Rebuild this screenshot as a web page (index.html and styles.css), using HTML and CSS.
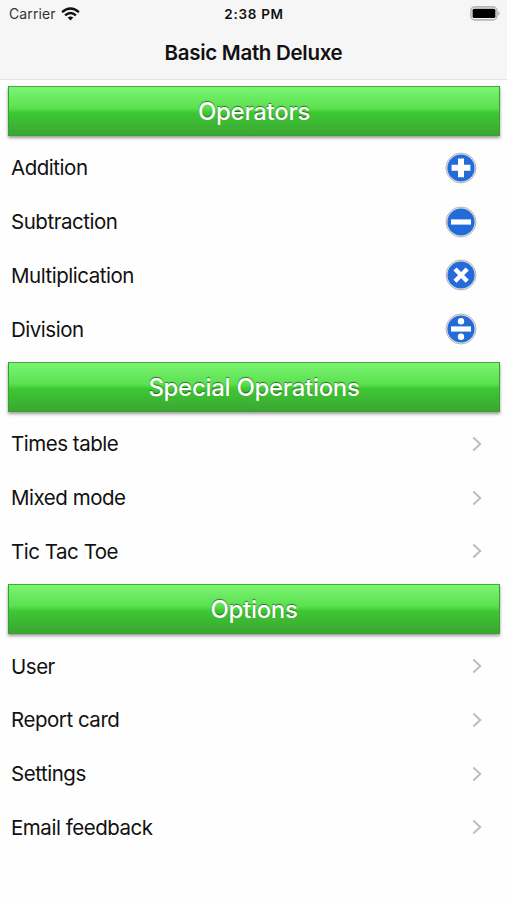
FILE: index.html
```html
<!DOCTYPE html>
<html lang="en">
<head>
<meta charset="utf-8">
<meta name="viewport" content="width=device-width">
<title>Basic Math Deluxe</title>
<link rel="stylesheet" href="styles.css">
</head>
<body>
<header class="top">
  <div class="status">
    <div class="carrier"><span>Carrier</span>
      <svg class="wifi" width="19" height="14" viewBox="0 0 19 14" fill="none" stroke="#111" stroke-width="2.5"><path d="M1.1 5.1Q9.5-2 17.9 5.1"/><path d="M4.1 8.4Q9.5 3.7 14.9 8.4"/><path d="M6.7 10.6Q9.5 8.2 12.3 10.6L9.5 13.5Z" fill="#111" stroke="none"/></svg>
    </div>
    <time class="time">2:38 PM</time>
    <svg class="battery" width="31" height="15" viewBox="0 0 31 15"><rect x=".9" y=".9" width="26" height="13" rx="4" fill="#f7f7f7" stroke="#b7b7b7" stroke-width="1.6"/><rect x="2.6" y="2.8" width="22.8" height="9.2" rx="1.5" fill="#000"/><path d="M28.2 5Q31 7.4 28.2 9.8Z" fill="#aaa"/></svg>
  </div>
  <h1 class="title">Basic Math Deluxe</h1>
</header>
<main>
  <section>
    <h2 class="banner">Operators</h2>
    <ul class="rows">
      <li class="row"><span>Addition</span><svg class="op" viewBox="0 0 32 32"><circle class="rim" cx="16" cy="16" r="15"/><circle class="disc" cx="16" cy="16" r="13.6"/><path class="sign" d="M16 6.4V25.2M6.6 15.8H25.4"/></svg></li>
      <li class="row"><span>Subtraction</span><svg class="op" viewBox="0 0 32 32"><circle class="rim" cx="16" cy="16" r="15"/><circle class="disc" cx="16" cy="16" r="13.6"/><path class="sign bar" d="M6 16H26"/></svg></li>
      <li class="row"><span>Multiplication</span><svg class="op" viewBox="0 0 32 32"><circle class="rim" cx="16" cy="16" r="15"/><circle class="disc" cx="16" cy="16" r="13.6"/><path class="sign thin" d="M10 10L22.2 22.2M22.2 10L10 22.2"/></svg></li>
      <li class="row"><span>Division</span><svg class="op" viewBox="0 0 32 32"><circle class="rim" cx="16" cy="16" r="15"/><circle class="disc" cx="16" cy="16" r="13.6"/><path class="sign bar" d="M6 16H26"/><circle class="dot" cx="16" cy="8.2" r="3.2"/><circle class="dot" cx="16" cy="23.8" r="3.2"/></svg></li>
    </ul>
  </section>
  <section>
    <h2 class="banner">Special Operations</h2>
    <ul class="rows">
      <li class="row"><span>Times table</span><svg class="chevron" viewBox="0 0 10 16"><path d="M1.3 1.5L8.2 8L1.3 14.5"/></svg></li>
      <li class="row"><span>Mixed mode</span><svg class="chevron" viewBox="0 0 10 16"><path d="M1.3 1.5L8.2 8L1.3 14.5"/></svg></li>
      <li class="row"><span>Tic Tac Toe</span><svg class="chevron" viewBox="0 0 10 16"><path d="M1.3 1.5L8.2 8L1.3 14.5"/></svg></li>
    </ul>
  </section>
  <section>
    <h2 class="banner">Options</h2>
    <ul class="rows">
      <li class="row"><span>User</span><svg class="chevron" viewBox="0 0 10 16"><path d="M1.3 1.5L8.2 8L1.3 14.5"/></svg></li>
      <li class="row"><span>Report card</span><svg class="chevron" viewBox="0 0 10 16"><path d="M1.3 1.5L8.2 8L1.3 14.5"/></svg></li>
      <li class="row"><span>Settings</span><svg class="chevron" viewBox="0 0 10 16"><path d="M1.3 1.5L8.2 8L1.3 14.5"/></svg></li>
      <li class="row"><span>Email feedback</span><svg class="chevron" viewBox="0 0 10 16"><path d="M1.3 1.5L8.2 8L1.3 14.5"/></svg></li>
    </ul>
  </section>
</main>
</body>
</html>
```
FILE: styles.css
```css
* { box-sizing: border-box; }
body {
  margin: 0;
  min-height: 900px;
  background: #fefefe;
  color: #111;
  font-family: Inter, "Liberation Sans", sans-serif;
}
.top {
  height: 80px;
  background: #f6f6f6;
  border-bottom: 1.5px solid #e2e2e2;
}
.status {
  height: 27px;
  padding: 0 6px 0 9px;
  display: grid;
  grid-template-columns: 1fr auto 1fr;
  align-items: center;
  font-size: 14px;
}
.carrier {
  display: flex;
  align-items: center;
  gap: 5px;
  color: #333;
  letter-spacing: 0.1px;
}
.time { margin-right: 2px; font-size: 13.5px; font-weight: 600; letter-spacing: 0.7px; }
.battery { justify-self: end; }
.title {
  margin: 0;
  height: 51px;
  line-height: 52px;
  text-align: center;
  font-size: 20.5px;
  font-weight: 600;
  letter-spacing: -0.3px;
}
.banner {
  margin: 0 7px 4.8px 8px;
  height: 50px;
  line-height: 49px;
  border: 1px solid #37a032;
  border-top-color: #46a843;
  background: linear-gradient(#7bf571, #5be050 44%, #3dc832 54%, #3ba632);
  box-shadow: 0 2px 3px rgba(0, 0, 0, 0.4);
  color: #fff;
  text-align: center;
  text-shadow: 0 -1px 1px rgba(0, 0, 0, 0.5);
  font-size: 24px;
  font-weight: 500;
  letter-spacing: -0.3px;
}
section { padding-top: 6.2px; }
section + section { padding-top: 6px; }
.rows { margin: 0; padding: 0; list-style: none; }
.row {
  height: 53.8px;
  padding: 0 25px 0 11px;
  display: flex;
  align-items: center;
  justify-content: space-between;
  font-size: 20.5px;
  letter-spacing: -0.47px;
}
.op { width: 32px; height: 32px; margin-right: 5px; }
.rim { fill: #e4e4e4; stroke: #b3b6ba; stroke-width: 1; }
.disc { fill: #236bd9; }
.sign { stroke: #fff; stroke-width: 6; fill: none; }
.bar { stroke-width: 5.2; }
.thin { stroke-width: 4.4; }
.dot { fill: #fff; }
.chevron { width: 10px; height: 16px; fill: none; stroke: #bebec0; stroke-width: 2; }
```
